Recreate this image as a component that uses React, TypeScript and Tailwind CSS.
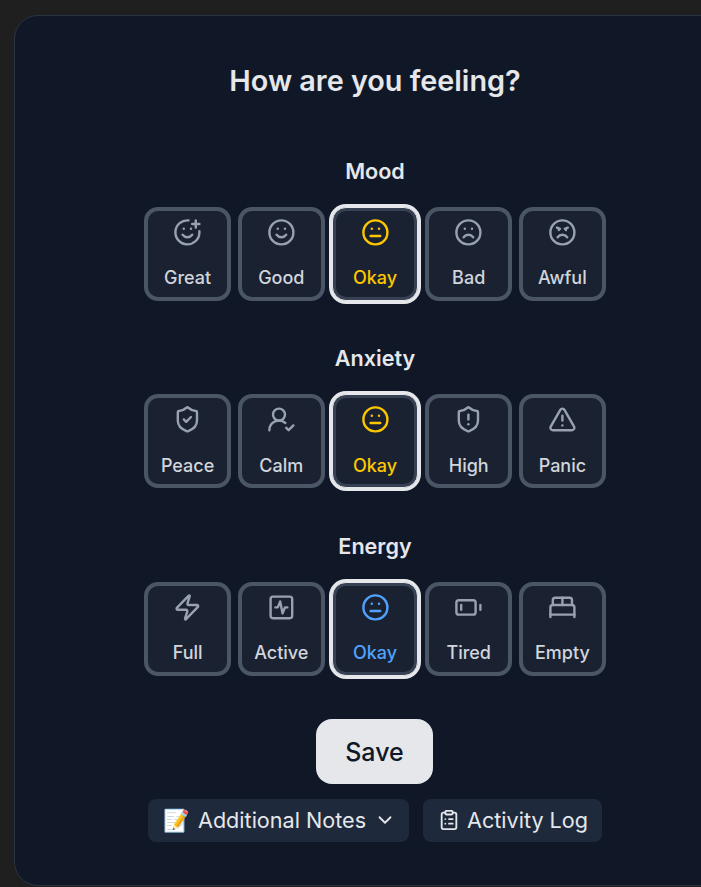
import { Smile, SmilePlus, Meh, Frown, Angry, ShieldCheck, UserRoundCheck, ShieldAlert, TriangleAlert, Zap, SquareActivity, BatteryLow, BedDouble, ChevronDown, ClipboardList } from "lucide-react";

const groups = [
  { title: "Mood", active: "text-[#fdc700]", items: [["Great", SmilePlus], ["Good", Smile], ["Okay", Meh], ["Bad", Frown], ["Awful", Angry]] },
  { title: "Anxiety", active: "text-[#fdc700]", items: [["Peace", ShieldCheck], ["Calm", UserRoundCheck], ["Okay", Meh], ["High", ShieldAlert], ["Panic", TriangleAlert]] },
  { title: "Energy", active: "text-[#51a2ff]", items: [["Full", Zap], ["Active", SquareActivity], ["Okay", Meh], ["Tired", BatteryLow], ["Empty", BedDouble]] },
] as const;

export default function App() {
  return (
    <div className="w-[701px] h-[887px] overflow-hidden bg-[#1f1f1f] pl-[14px] pt-[15px] font-['Inter',sans-serif]">
      <div className="w-[722px] h-[871px] rounded-[24px] border border-[#2a3344] bg-[#101828] flex flex-col items-center pt-[45px]">
        <h1 className="text-[28.8px] leading-[40px] font-semibold text-[#e5e7eb]">How are you feeling?</h1>
        <div className="mt-[55.9px] flex flex-col gap-[43.5px] items-center">
          {groups.map((g) => (
            <section key={g.title} className="flex flex-col items-center gap-[22px]">
              <h2 className="text-[21.6px] leading-[28px] font-semibold text-[#e5e7eb]">{g.title}</h2>
              <div className="grid grid-cols-5 gap-[7px] w-[461.5px]">
                {g.items.map(([label, Icon]) => {
                  const on = label === "Okay";
                  return (
                    <button key={label} className={`h-[94px] rounded-[14px] bg-[#1a2232] flex flex-col items-center ${on ? "border border-[#e5e7eb] inset-ring-[3px] inset-ring-[#364153] ring-[3px] ring-[#e5e7eb] pt-[10px]" : "border-4 border-[#4a5565] pt-[7px]"}`}>
                      <Icon size={28.8} className={on ? g.active : "text-[#99a1af]"} />
                      <span className={`mt-[17.4px] text-[18px] leading-[28px] font-medium ${on ? g.active : "text-[#d1d5dc]"}`}>{label}</span>
                    </button>
                  );
                })}
              </div>
            </section>
          ))}
        </div>
        <button className="mt-[43px] mr-[1px] w-[117px] h-[65px] pt-[2px] rounded-[16px] bg-[#e5e7eb] text-[#101828] text-[25px] font-medium">Save</button>
        <div className="mt-[15px] flex gap-[14px]">
          <button className="h-[43px] w-[261px] pl-[15px] rounded-[8px] bg-[#1e293b] text-[#e5e7eb] text-[21.6px] flex items-center justify-start gap-[8px]">
            <span>📝</span><span>Additional Notes</span><ChevronDown size={22} />
          </button>
          <button className="h-[43px] w-[179px] pl-[15px] rounded-[8px] bg-[#1e293b] text-[#e5e7eb] text-[21.6px] flex items-center justify-start gap-[7px]">
            <ClipboardList size={22} /><span>Activity Log</span>
          </button>
        </div>
      </div>
    </div>
  );
}
